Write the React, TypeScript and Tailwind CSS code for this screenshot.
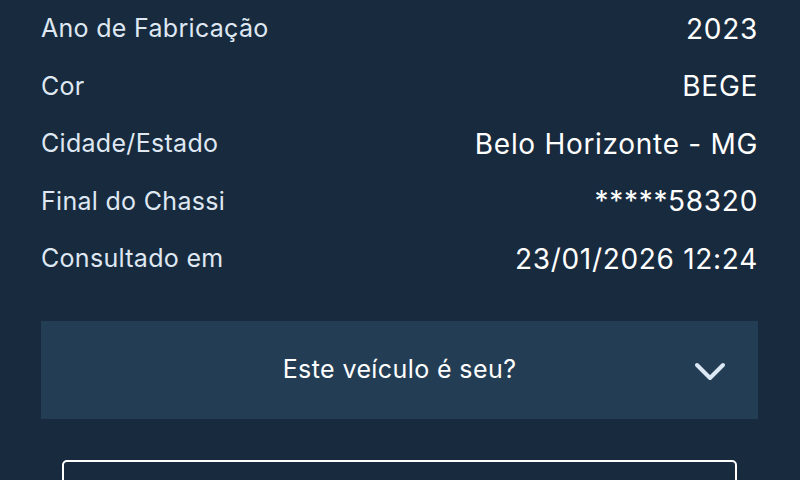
const rows = [
  { label: "Ano de Fabricação", value: "2023" },
  { label: "Cor", value: "BEGE" },
  { label: "Cidade/Estado", value: "Belo Horizonte - MG" },
  { label: "Final do Chassi", value: "*****58320" },
  { label: "Consultado em", value: "23/01/2026 12:24" },
];

export default function App() {
  return (
    <div
      className="w-[800px] h-[480px] overflow-hidden bg-[#182a3e] pl-[41px] pr-[42px]"
      style={{ fontFamily: "Inter, 'Noto Sans', sans-serif" }}
    >
      <div className="flex flex-col">
        {rows.map((r) => (
          <div key={r.label} className="flex h-[57.5px] items-center justify-between">
            <span className="text-[25px] tracking-[0.3px] text-[#dfe8f2]">{r.label}</span>
            <span className="text-[28px] tracking-[0.7px] text-white">{r.value}</span>
          </div>
        ))}
      </div>

      <div className="mt-[33px] flex h-[98px] items-center justify-center relative bg-[#233d55]">
        <span className="text-[25px] tracking-[0.4px] text-white">Este veículo é seu?</span>
        <svg
          className="absolute right-[32px] top-[41px]"
          width="32"
          height="20"
          viewBox="0 0 32 20"
          fill="none"
          stroke="#dde8f5"
          strokeWidth="4"
          strokeLinecap="round"
          strokeLinejoin="round"
        >
          <polyline points="3,3 16,16 29,3" />
        </svg>
      </div>

      <div className="mx-[21px] mt-[41px] h-[60px] rounded-[5px] border-2 border-white"></div>
    </div>
  );
}
